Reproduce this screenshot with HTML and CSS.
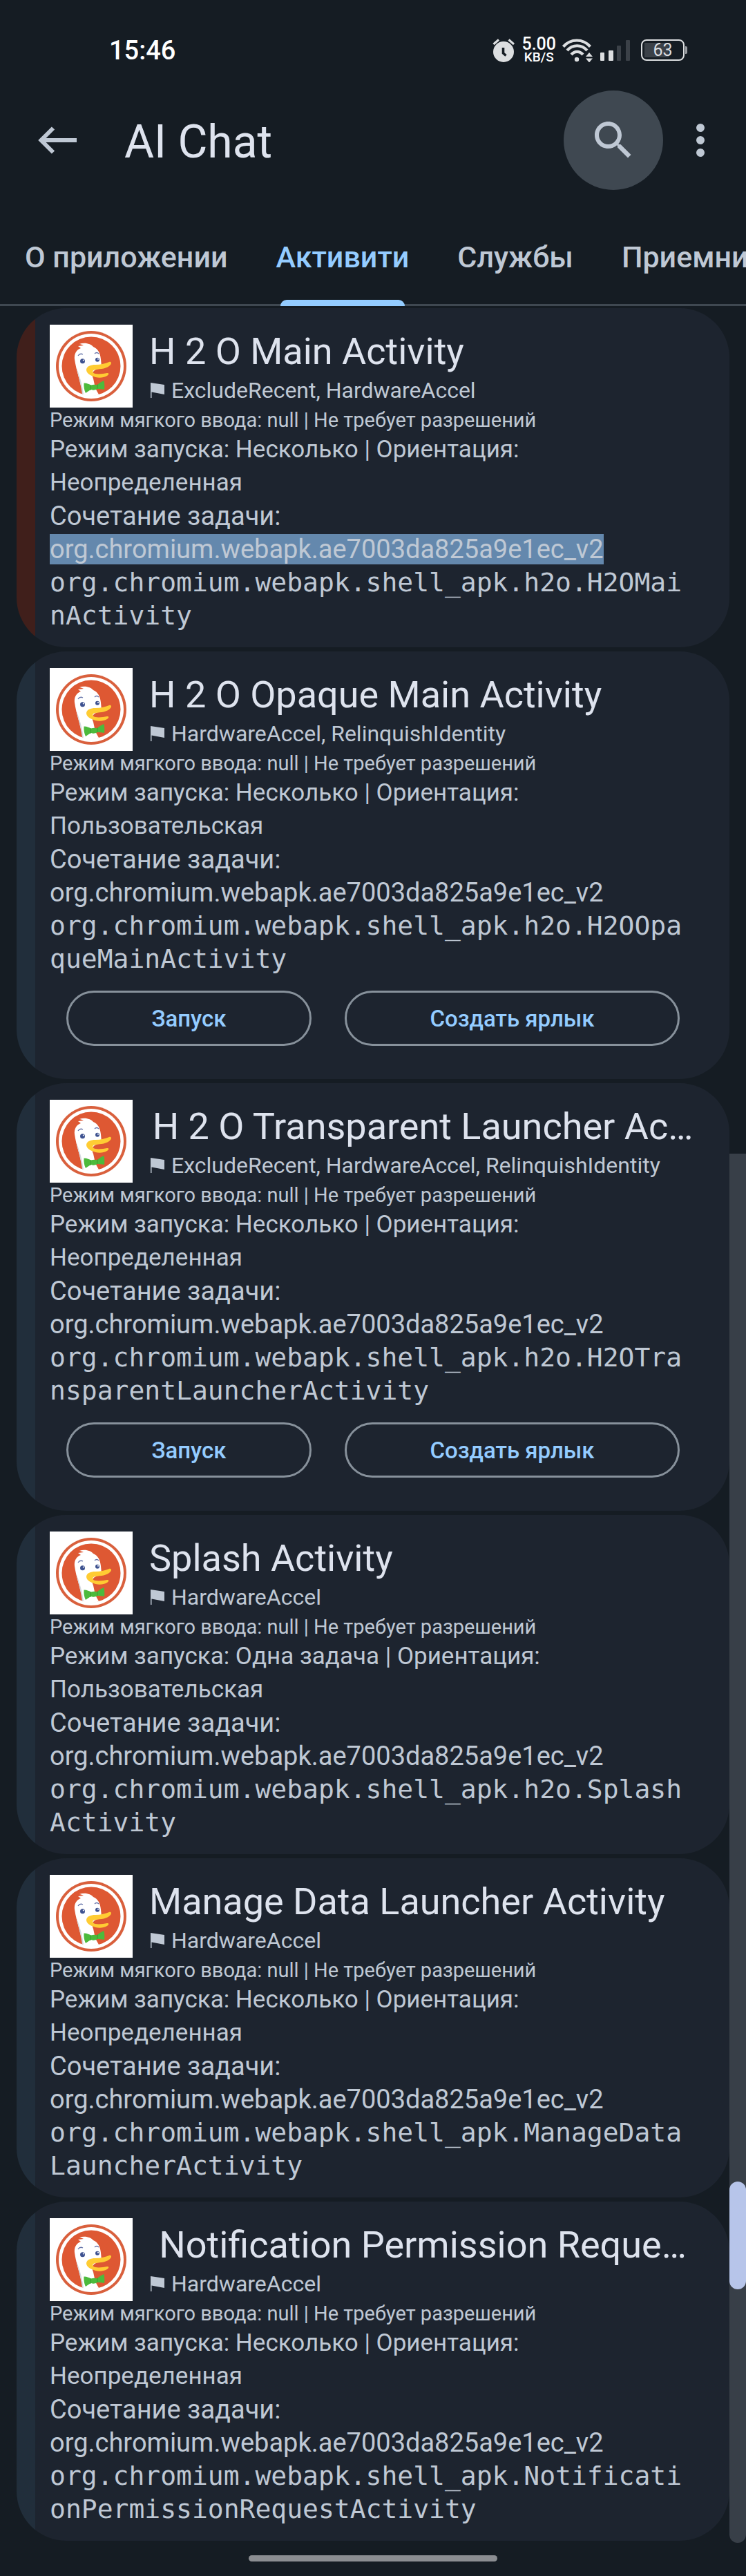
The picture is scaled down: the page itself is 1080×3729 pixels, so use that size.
FILE: index.html
```html
<!DOCTYPE html>
<html lang="ru">
<head>
<meta charset="utf-8">
<meta name="viewport" content="width=device-width, initial-scale=1">
<title>AI Chat</title>
<link rel="stylesheet" href="styles.css">
</head>
<body>
<svg class="sprite" aria-hidden="true">
  <symbol id="duck" viewBox="0 0 120 120">
    <rect width="120" height="120" fill="#fff"/>
    <circle cx="60" cy="60" r="51" fill="#d9603d"/>
    <circle cx="60" cy="60" r="47" fill="#fff"/>
    <circle cx="60" cy="60" r="42.500" fill="#de5833"/>
    <path d="M48 101C45 84 38 65 36 50c-1-8 3-14 9-16l-4-3c3 0 5-1 8-1-2-1-4-2-6-2 8-3 17 0 20 4 7 3 10 9 11 18l1 11-10 5c-4 3-4 8-2 12l3 14 5 9c-7 3-16 3-23 0z" fill="#fff"/>
    <path d="M38 60c3 13 7 26 9 40l2 1c-2-15-6-28-11-41z" fill="#d5d8de"/>
    <circle cx="47.500" cy="52.700" r="3.500" fill="#3e5290"/><circle cx="48.800" cy="51.500" r="1" fill="#fff"/>
    <circle cx="69" cy="50.700" r="3" fill="#3e5290"/><circle cx="70" cy="49.700" r="1" fill="#fff"/>
    <path d="M41 45c2-3 5-3 7-2M65 42c2-2 4-2 6 0" fill="none" stroke="#6573a8" stroke-width="1.300"/>
    <path d="M53 65c1-5 6-7 13-7 8 0 15-2 20-4 3-1 4 2 2 4-5 6-14 6-22 7-5 1-5 5 0 6 5 1 12 0 17-1 3 0 3 2 0 4-7 4-16 3-22 0-5-2-8-5-8-9z" fill="#ffcc33"/>
    <path d="M49.500 84.500c5 0 8 2 10 3 4-1 7-1 9 0 3-3 6-5 10-6.500 1 5 1 9 0.500 13-4-1-7-1-10-1-3 2-7 2-9 1-3 1-5 3-8 5-2-4-3-9-2.500-14.500z" fill="#4cba3c"/>
    <path d="M59.500 87.500v7M69 86.500v6" stroke="#389b2f" stroke-width="1"/>
  </symbol>
  <symbol id="flag" viewBox="0 0 20 22"><path d="M0 0l20 3v14L1.500 13.500V22H0z" fill="currentColor"/></symbol>
</svg>

<header class="top">
  <div class="status">
    <time class="clock">15:46</time>
    <div class="indicators">
      <svg class="alarm" viewBox="0 0 32 34" width="32" height="34"><circle cx="16" cy="19" r="15" fill="#dcdee0"/><path d="M1.500 8L9 1.500M31 8l-7.500-6.500" stroke="#dcdee0" stroke-width="3.200"/><path d="M15.500 13v8l4 3.500" fill="none" stroke="#151c23" stroke-width="3.600"/></svg>
      <div class="speed"><span>5.00</span><small>KB/S</small></div>
      <svg class="wifi" viewBox="0 0 44 34" width="44" height="34"><g fill="none" stroke="#dcdee0" stroke-width="4.200"><path d="M1.500 11.500C12-.500 30-.500 40.500 11.500"/><path d="M7 17c8-9 21-9 29 0"/><path d="M13 23c5-5.500 12-5.500 17 0"/></g><circle cx="21" cy="30" r="3.200" fill="#dcdee0"/><path d="M34 26l5-6 5 6zM34 28.500h10l-5 6z" fill="#dcdee0"/></svg>
      <svg class="signal" viewBox="0 0 44 30" width="44" height="30"><rect y="18" width="6" height="12" rx="1" fill="#dcdee0"/><rect x="12" y="15" width="7" height="15" rx="1" fill="#dcdee0"/><rect x="24" y="8" width="6" height="22" rx="1" fill="#3b4148"/><rect x="37" width="6" height="30" rx="1" fill="#3b4148"/></svg>
      <div class="battery">63</div>
    </div>
  </div>
  <div class="toolbar">
    <button class="tool back" aria-label="Назад"><svg viewBox="0 0 72 72" width="72" height="72"><path d="M63 36H12M29 18.500L11.500 36 29 53.500" fill="none" stroke="currentColor" stroke-width="6"/></svg></button>
    <h1>AI Chat</h1>
    <button class="tool search" aria-label="Поиск"><svg viewBox="0 0 24 24" width="72" height="72"><path fill="currentColor" d="M15.500 14h-.790l-.280-.270C15.410 12.590 16 11.110 16 9.500 16 5.910 13.090 3 9.500 3S3 5.910 3 9.500 5.910 16 9.500 16c1.610 0 3.090-.590 4.230-1.570l.270.280v.790l5 4.990L20.490 19l-4.990-5zm-6 0C7.010 14 5 11.990 5 9.500S7.010 5 9.500 5 14 7.010 14 9.500 11.990 14 9.500 14z"/></svg></button>
    <button class="tool more" aria-label="Ещё"><svg viewBox="0 0 24 24" width="72" height="72"><g fill="currentColor"><circle cx="12" cy="6" r="2"/><circle cx="12" cy="12" r="2"/><circle cx="12" cy="18" r="2"/></g></svg></button>
  </div>
  <nav class="tabs" role="tablist">
    <button class="tab" role="tab">О приложении</button>
    <button class="tab active" role="tab" aria-selected="true">Активити</button>
    <button class="tab" role="tab">Службы</button>
    <button class="tab" role="tab">Приемники</button>
  </nav>
</header>

<main class="list">
  <article class="card exported-no">
    <div class="head">
      <svg class="logo"><use href="#duck"/></svg>
      <div class="names"><h2>H 2 O Main Activity</h2><p class="flags"><svg class="flag"><use href="#flag"/></svg>ExcludeRecent, HardwareAccel</p></div>
    </div>
    <p class="soft">Режим мягкого ввода: null | Не требует разрешений</p>
    <p class="mode">Режим запуска: Несколько | Ориентация:<br>Неопределенная</p>
    <p class="task">Сочетание задачи:<br><mark>org.chromium.webapk.ae7003da825a9e1ec_v2</mark></p>
    <p class="class">org.chromium.webapk.shell_apk.h2o.H2OMainActivity</p>
  </article>

  <article class="card">
    <div class="head">
      <svg class="logo"><use href="#duck"/></svg>
      <div class="names"><h2>H 2 O Opaque Main Activity</h2><p class="flags"><svg class="flag"><use href="#flag"/></svg>HardwareAccel, RelinquishIdentity</p></div>
    </div>
    <p class="soft">Режим мягкого ввода: null | Не требует разрешений</p>
    <p class="mode">Режим запуска: Несколько | Ориентация:<br>Пользовательская</p>
    <p class="task">Сочетание задачи:<br>org.chromium.webapk.ae7003da825a9e1ec_v2</p>
    <p class="class">org.chromium.webapk.shell_apk.h2o.H2OOpaqueMainActivity</p>
    <div class="actions"><button>Запуск</button><button>Создать ярлык</button></div>
  </article>

  <article class="card">
    <div class="head">
      <svg class="logo"><use href="#duck"/></svg>
      <div class="names"><h2 class="clipped">H 2 O Transparent Launcher Ac…</h2><p class="flags"><svg class="flag"><use href="#flag"/></svg>ExcludeRecent, HardwareAccel, RelinquishIdentity</p></div>
    </div>
    <p class="soft">Режим мягкого ввода: null | Не требует разрешений</p>
    <p class="mode">Режим запуска: Несколько | Ориентация:<br>Неопределенная</p>
    <p class="task">Сочетание задачи:<br>org.chromium.webapk.ae7003da825a9e1ec_v2</p>
    <p class="class">org.chromium.webapk.shell_apk.h2o.H2OTransparentLauncherActivity</p>
    <div class="actions"><button>Запуск</button><button>Создать ярлык</button></div>
  </article>

  <article class="card">
    <div class="head">
      <svg class="logo"><use href="#duck"/></svg>
      <div class="names"><h2>Splash Activity</h2><p class="flags"><svg class="flag"><use href="#flag"/></svg>HardwareAccel</p></div>
    </div>
    <p class="soft">Режим мягкого ввода: null | Не требует разрешений</p>
    <p class="mode">Режим запуска: Одна задача | Ориентация:<br>Пользовательская</p>
    <p class="task">Сочетание задачи:<br>org.chromium.webapk.ae7003da825a9e1ec_v2</p>
    <p class="class">org.chromium.webapk.shell_apk.h2o.SplashActivity</p>
  </article>

  <article class="card">
    <div class="head">
      <svg class="logo"><use href="#duck"/></svg>
      <div class="names"><h2>Manage Data Launcher Activity</h2><p class="flags"><svg class="flag"><use href="#flag"/></svg>HardwareAccel</p></div>
    </div>
    <p class="soft">Режим мягкого ввода: null | Не требует разрешений</p>
    <p class="mode">Режим запуска: Несколько | Ориентация:<br>Неопределенная</p>
    <p class="task">Сочетание задачи:<br>org.chromium.webapk.ae7003da825a9e1ec_v2</p>
    <p class="class">org.chromium.webapk.shell_apk.ManageDataLauncherActivity</p>
  </article>

  <article class="card">
    <div class="head">
      <svg class="logo"><use href="#duck"/></svg>
      <div class="names"><h2 class="clipped">Notification Permission Reque…</h2><p class="flags"><svg class="flag"><use href="#flag"/></svg>HardwareAccel</p></div>
    </div>
    <p class="soft">Режим мягкого ввода: null | Не требует разрешений</p>
    <p class="mode">Режим запуска: Несколько | Ориентация:<br>Неопределенная</p>
    <p class="task">Сочетание задачи:<br>org.chromium.webapk.ae7003da825a9e1ec_v2</p>
    <p class="class">org.chromium.webapk.shell_apk.NotificationPermissionRequestActivity</p>
  </article>

  <div class="scrollbar" aria-hidden="true"><div class="thumb"></div></div>
</main>
<footer class="home"><span></span></footer>
</body>
</html>
```
FILE: styles.css
```css
* { box-sizing: border-box; }

body {
  margin: 0;
  background: #151c23;
  color: #bfc8d4;
  font-family: Roboto, "Liberation Sans", sans-serif;
}

h1, h2, p { margin: 0; font-weight: 400; }
button { font-family: inherit; background: none; border: 0; padding: 0; color: inherit; }
svg { display: block; flex: none; }
.sprite { position: absolute; width: 0; height: 0; }

/* status bar */
.status {
  display: flex;
  justify-content: space-between;
  align-items: center;
  height: 131px;
  padding: 14px 85px 0 158px;
}
.clock { font-size: 38px; font-weight: 500; color: #fff; }
.indicators { display: flex; align-items: center; }
.speed {
  display: flex;
  flex-direction: column;
  align-items: center;
  margin: 0 9px 0 10px;
  color: #fff;
  font-weight: 500;
}
.speed span { font-size: 25px; line-height: 20px; }
.speed small { font-size: 19px; line-height: 17px; }
.signal { margin: 0 15px 0 11px; }
.battery {
  position: relative;
  width: 63px;
  height: 31px;
  margin-right: 4px;
  border: 2px solid #dcdee0;
  border-radius: 8px;
  background: linear-gradient(#3b4148, #3b4148) 3px 3px / 35px 21px no-repeat;
  color: #dcdee0;
  font-size: 25px;
  line-height: 28px;
  text-align: center;
}
.battery::after {
  content: "";
  position: absolute;
  right: -6px;
  top: 8px;
  width: 3px;
  height: 11px;
  border-radius: 0 2px 2px 0;
  background: #9da0a4;
}

/* toolbar */
.toolbar {
  display: flex;
  align-items: center;
  height: 144px;
  padding: 0 30px 0 48px;
  color: #bfc8d4;
}
.toolbar h1 {
  flex: 1;
  margin-left: 60px;
  padding-top: 6px;
  font-size: 66px;
  line-height: 80px;
  color: #dee3ee;
}
.search {
  display: grid;
  place-items: center;
  width: 144px;
  height: 144px;
  margin-right: 18px;
  border-radius: 50%;
  background: #3f4851;
}

/* tabs */
.tabs {
  display: flex;
  gap: 70px;
  height: 168px;
  padding: 0 36px;
  border-bottom: 3px solid #3f4851;
  overflow-x: clip;
}
.tab {
  position: relative;
  flex: none;
  padding: 28px 0 0;
  font-size: 43px;
  font-weight: 500;
}
.active { color: #94ccff; }
.active::after {
  content: "";
  position: absolute;
  left: 6px;
  right: 6px;
  bottom: -3px;
  height: 9px;
  border-radius: 9px 9px 0 0;
  background: #94ccff;
}

/* activity list */
.list {
  position: relative;
  display: flex;
  flex-direction: column;
  gap: 6px;
  padding: 3px 24px 0;
}
.card {
  padding: 24px 48px 22px;
  border-radius: 72px;
  background: linear-gradient(90deg, #212e3b 27px, #1d242f 27px);
}
.exported-no { background: linear-gradient(90deg, #401f1b 27px, #1d242f 27px); }
.head { display: flex; align-items: center; gap: 24px; }
.logo { width: 120px; height: 120px; }
.names { flex: 1; min-width: 0; }
.names h2 { font-size: 54px; line-height: 64px; color: #dee3ee; white-space: nowrap; }
.names .clipped { text-align: center; }
.flags {
  display: flex;
  align-items: center;
  gap: 10px;
  margin-top: 6px;
  padding-left: 2px;
  font-size: 32px;
  line-height: 36px;
  white-space: nowrap;
}
.flag { width: 20px; height: 22px; }
.soft { font-size: 29px; line-height: 37px; }
.mode { font-size: 35px; line-height: 48px; }
.task { font-size: 38px; line-height: 48px; }
.task mark { background: #6488ad; color: inherit; }
.class {
  font-family: "DejaVu Sans Mono", monospace;
  font-size: 38px;
  line-height: 48px;
  word-break: break-all;
}
.actions { display: flex; gap: 48px; margin: 22px 24px 26px; }
.actions button {
  flex: 1 1 auto;
  height: 80px;
  border: 3px solid #87919b;
  border-radius: 40px;
  color: #94ccff;
  font-size: 33px;
  font-weight: 500;
}

/* overlay scrollbar */
.scrollbar {
  position: absolute;
  top: 1227px;
  right: 0;
  bottom: -3px;
  width: 24px;
  border-radius: 0 0 12px 12px;
  background: #383f48;
}
.thumb {
  position: absolute;
  top: 74%;
  width: 100%;
  height: 156px;
  border-radius: 12px;
  background: #b7c5ea;
}

/* gesture bar */
.home { display: flex; justify-content: center; padding: 21px 0; }
.home span { width: 33.333%; height: 9px; border-radius: 5px; background: #8b8d91; }
```
